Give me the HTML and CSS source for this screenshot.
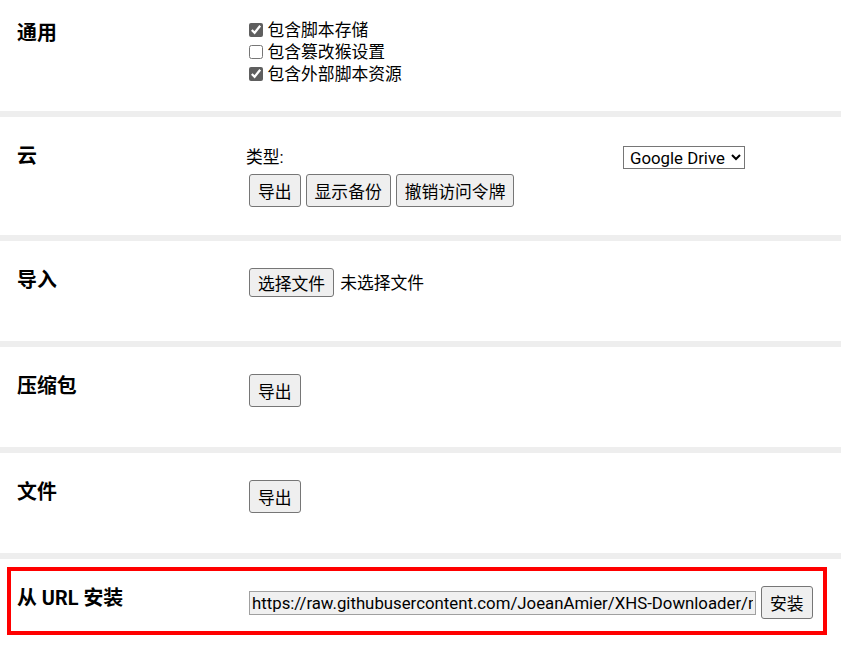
FILE: index.html
```html
<!DOCTYPE html>
<html lang="zh-CN">
<head>
<meta charset="utf-8">
<title>实用工具</title>
<link rel="stylesheet" href="styles.css">
</head>
<body>
<div class="page">
  <section class="section section--first">
    <h2 class="label">通用</h2>
    <div class="content">
      <label class="check"><input type="checkbox" checked>包含脚本存储</label>
      <label class="check"><input type="checkbox">包含篡改猴设置</label>
      <label class="check"><input type="checkbox" checked>包含外部脚本资源</label>
    </div>
  </section>

  <section class="section">
    <h2 class="label">云</h2>
    <div class="content content--cloud">
      <div class="type-row">
        <span class="type-label">类型:</span>
        <select class="select"><option>Google Drive</option></select>
      </div>
      <div class="btn-row">
        <button class="btn">导出</button>
        <button class="btn">显示备份</button>
        <button class="btn">撤销访问令牌</button>
      </div>
    </div>
  </section>

  <section class="section">
    <h2 class="label">导入</h2>
    <div class="content">
      <div class="file-row">
        <button class="btn btn--file">选择文件</button>
        <span class="file-name">未选择文件</span>
      </div>
    </div>
  </section>

  <section class="section">
    <h2 class="label">压缩包</h2>
    <div class="content">
      <button class="btn">导出</button>
    </div>
  </section>

  <section class="section">
    <h2 class="label">文件</h2>
    <div class="content">
      <button class="btn">导出</button>
    </div>
  </section>

  <section class="section section--last">
    <h2 class="label">从 URL 安装</h2>
    <div class="content">
      <div class="url-row">
        <input class="url-input" type="text" value="https://raw.githubusercontent.com/JoeanAmier/XHS-Downloader/new/static/XHS-Downloader.js">
        <button class="btn">安装</button>
      </div>
    </div>
    <div class="highlight"></div>
  </section>
</div>
</body>
</html>
```
FILE: styles.css
```css
html, body {
  margin: 0;
  padding: 0;
  background: #ffffff;
}

body {
  font-family: Roboto, "Noto Sans CJK SC", sans-serif;
  font-size: 16.8px;
  color: #000000;
  overflow: hidden;
}

.page {
  width: 841px;
}

.section {
  position: relative;
  display: grid;
  grid-template-columns: 229px 1fr;
  padding-left: 17px;
  min-height: 100px;
  border-bottom: 6px solid #eeeeee;
  box-sizing: content-box;
}

.section--first {
  min-height: 111px;
}

.label {
  margin: 0;
  padding-top: 25px;
  font-size: 19.9px;
  font-weight: bold;
  line-height: 30px;
}

.section--first .label {
  padding-top: 19px;
}

.content {
  padding-top: 27px;
  padding-left: 3px;
}

.section--first .content {
  padding-top: 19px;
}

.check {
  display: flex;
  align-items: center;
  height: 22px;
  line-height: 22px;
  white-space: nowrap;
}

.check input {
  width: 13.5px;
  height: 13.5px;
  margin: 0 5px 0 0;
  accent-color: #5f5f5f;
}

.content--cloud {
  padding-top: 28px;
  padding-left: 0;
  padding-bottom: 28px;
}

.type-row {
  display: flex;
  align-items: center;
  height: 24px;
}

.type-label {
  width: 377px;
  line-height: 22px;
}

.select {
  width: 122px;
  height: 23px;
  font-family: Roboto, "Noto Sans CJK SC", sans-serif;
  font-size: 16.8px;
  color: #000;
  background: #ffffff;
  border: 1px solid #767676;
  border-radius: 0;
  padding: 0 0 0 2px;
}

.btn-row {
  display: flex;
  gap: 5px;
  margin-top: 5px;
  padding-left: 3px;
}

.btn {
  height: 33px;
  padding: 0 8px;
  font-family: "Noto Sans CJK SC", Roboto, sans-serif;
  font-size: 16.8px;
  line-height: 20px;
  color: #000;
  background: #efefef;
  border: 1px solid #767676;
  border-radius: 3px;
  white-space: nowrap;
}

.file-row {
  display: flex;
  align-items: center;
  gap: 6px;
}

.btn--file {
  height: 29px;
}

.file-name {
  line-height: 22px;
}

.url-row {
  display: flex;
  align-items: center;
  gap: 5px;
}

.url-input {
  width: 507px;
  height: 24px;
  box-sizing: border-box;
  margin: 0;
  padding: 0 2px;
  font-family: Roboto, "Noto Sans CJK SC", sans-serif;
  font-size: 16.8px;
  color: #000;
  background: #f0f0f0;
  border: 1px solid #a0a0a0;
  border-radius: 0;
}

.section--last {
  min-height: 87px;
  border-bottom: none;
}

.highlight {
  position: absolute;
  left: 7px;
  top: 8px;
  width: 820px;
  height: 68px;
  box-sizing: border-box;
  border: 4px solid #ff0000;
  pointer-events: none;
}
```
